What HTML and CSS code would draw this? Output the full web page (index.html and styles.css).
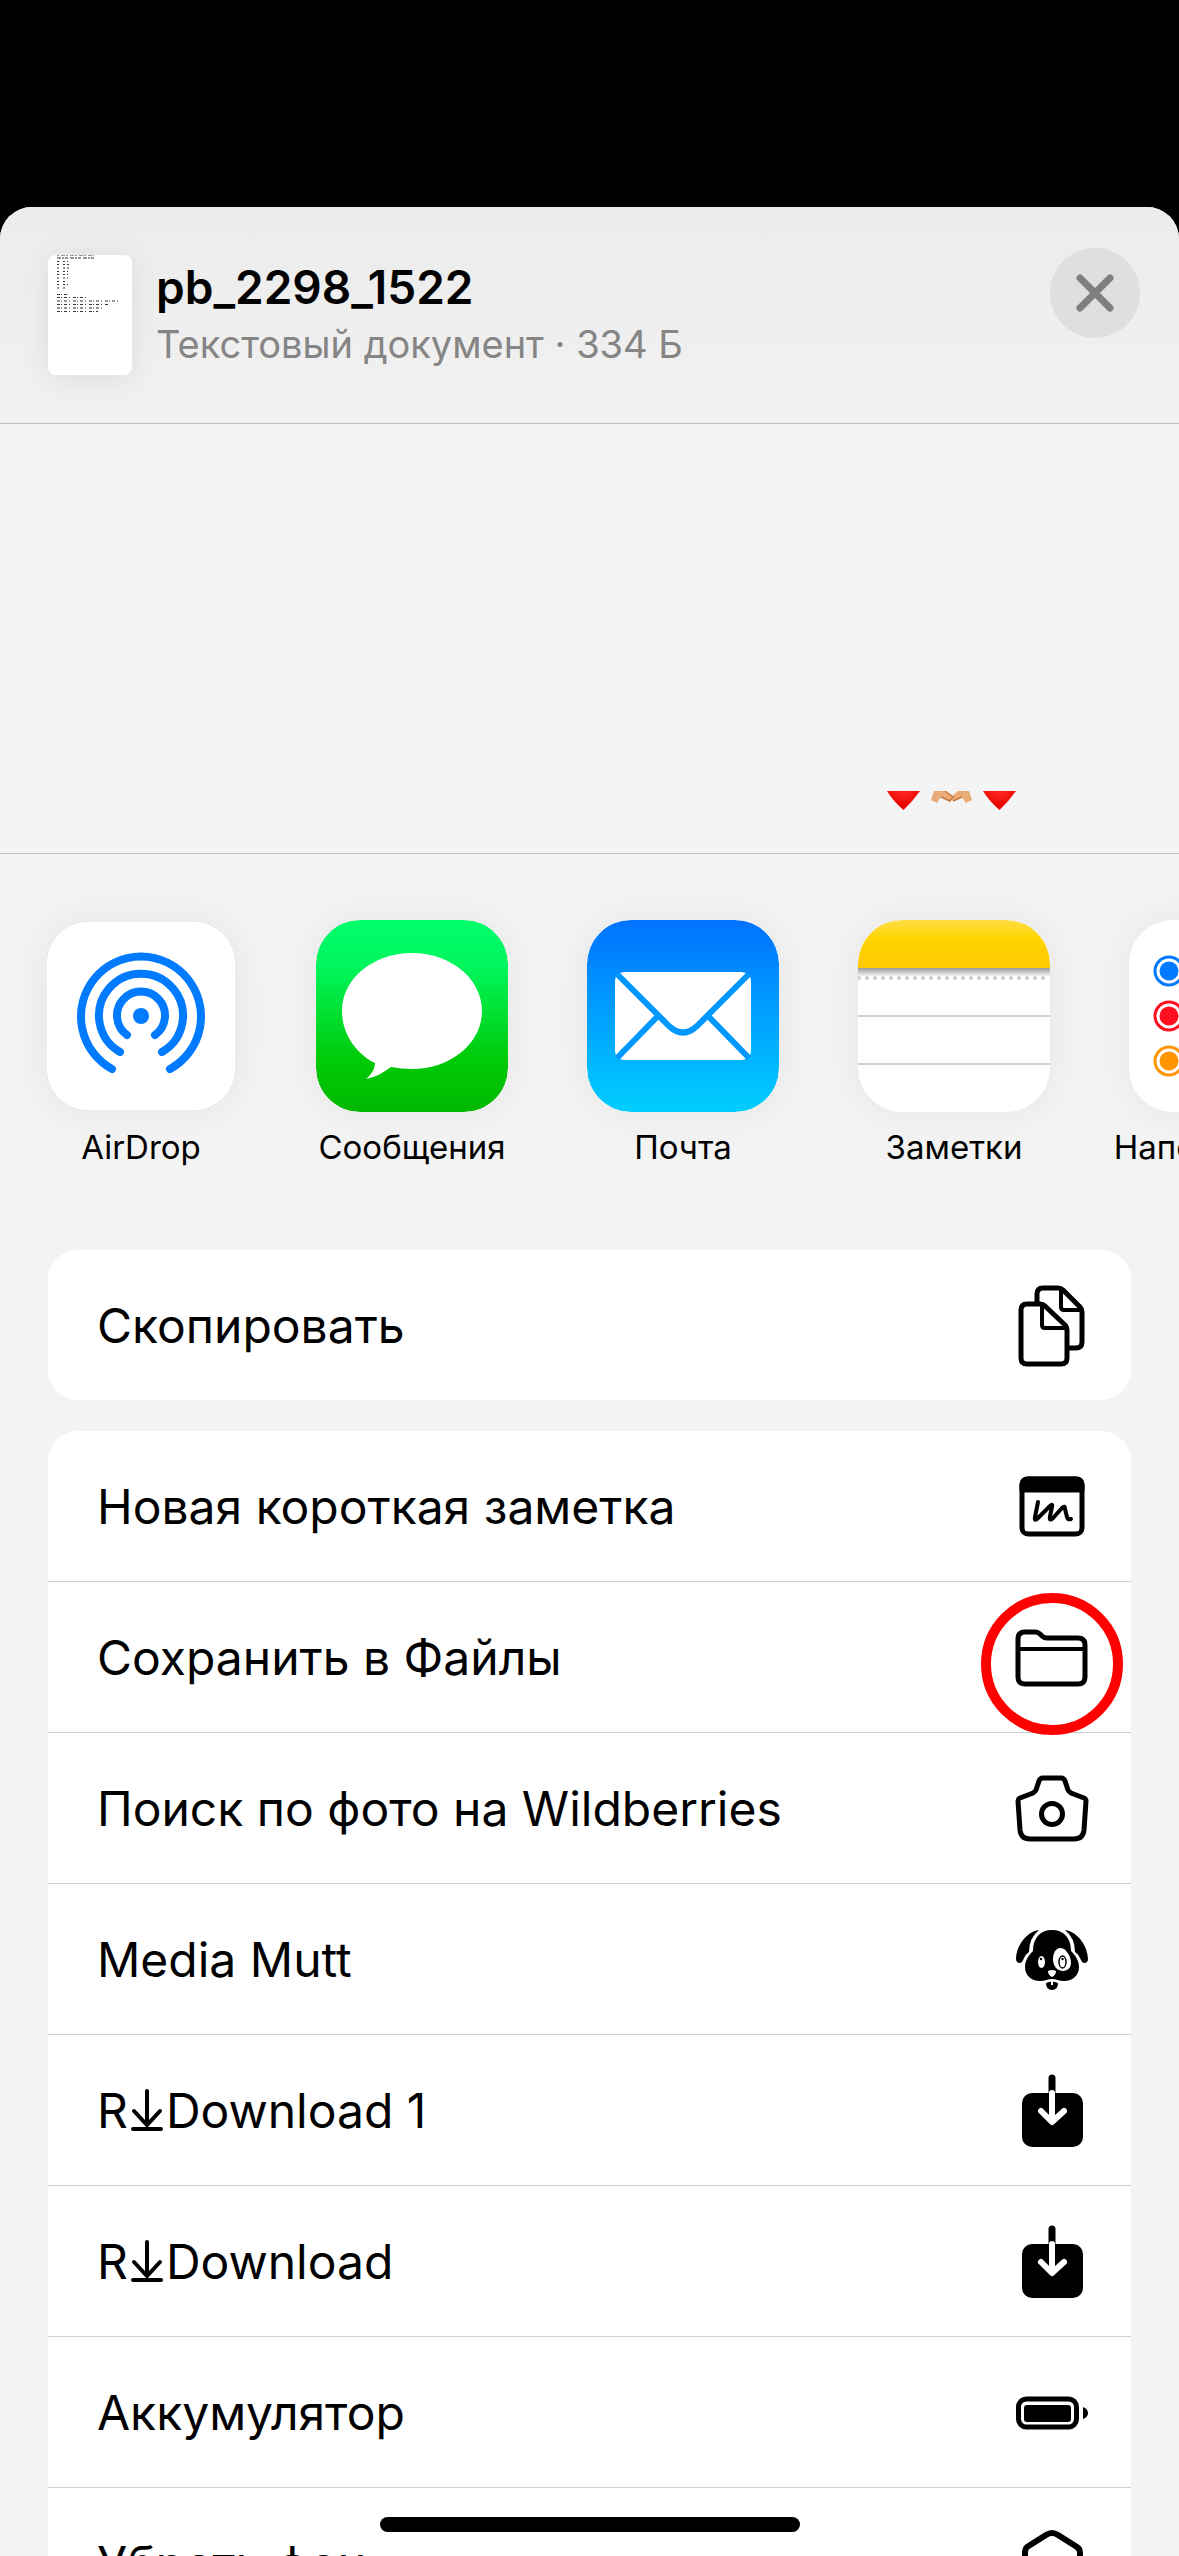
FILE: index.html
```html
<!DOCTYPE html>
<html lang="ru">

<head>
    <meta charset="UTF-8">
    <meta name="viewport" content="width=device-width, initial-scale=1.0">
    <title>pb_2298_1522</title>
    <link rel="stylesheet" href="styles.css">
</head>

<body>
    <main class="sheet">
        <!-- document header -->
        <header class="sheet-header">
            <svg class="thumb" viewBox="0 0 84 120" aria-hidden="true">
                <g stroke="#333" stroke-width="1.2" fill="none">
                    <path d="M9 .5h37" stroke-dasharray="2 2 4 1" opacity=".5" />
                    <path d="M9 3h38" stroke-dasharray="4 1 2 1 3 2" />
                    <path d="M9 6.500h11M9 9.500h15M9 13h16M9 16.500h11M9 19.500h11M9 23h11M9 26.500h10M9 29.500h11M9 33h10" stroke-dasharray="2 4 2 2" />
                    <path d="M9 39.500h10M9 42.500h32M9 46h64M9 49.500h51M9 53h48M9 56.500h41" stroke-dasharray="3 1 1 2 3 2 1 3" />
                </g>
            </svg>
            <div class="doc">
                <h1 class="doc-title">pb_2298_1522</h1>
                <p class="doc-info">Текстовый документ · 334 Б</p>
            </div>
            <button class="close" type="button" aria-label="Закрыть">
                <svg viewBox="0 0 90 90"><path d="M30 30l30 30M60 30L30 60" stroke="#7f7f80" stroke-width="7" stroke-linecap="round" /></svg>
            </button>
        </header>

        <!-- people -->
        <section class="people">
            <svg class="emoji" viewBox="0 0 130 20" aria-hidden="true">
                <defs>
                    <radialGradient id="heart" cx=".5" cy=".1" r=".7">
                        <stop offset="0" stop-color="#ff2a20" />
                        <stop offset="1" stop-color="#e60000" />
                    </radialGradient>
                </defs>
                <path d="M0 0h33Q26 10 16.500 19Q6 10 0 0z" fill="url(#heart)" />
                <path d="M47 0h11l7 6-2 4-9-4-4 6-6-3z" fill="#e9ac78" />
                <path d="M82 0h-11l-7 6 2 4 9-4 4 6 6-3z" fill="#e9ac78" />
                <path d="M54 6l9 4 3-4-8-6M75 6l-9 4" stroke="#c9763a" stroke-width="1.500" fill="none" />
                <path d="M96 0h33Q122 10 112.500 19Q102 10 96 0z" fill="url(#heart)" />
            </svg>
        </section>

        <!-- apps -->
        <nav class="apps">
            <a class="app" href="#">
                <svg class="app-icon" viewBox="0 0 192 192">
                    <rect class="edge" x="1" y="1" width="190" height="190" rx="43" fill="#fff" />
                    <g fill="none" stroke="#007aff" stroke-width="8" stroke-linecap="round">
                        <path d="M67 149A60 60 0 1 1 125 149" />
                        <path d="M75 132A42 42 0 1 1 117 132" />
                        <path d="M82 115A24 24 0 1 1 110 115" />
                    </g>
                    <circle cx="96" cy="96" r="8" fill="#007aff" />
                </svg>
                <span class="app-name">AirDrop</span>
            </a>
            <a class="app" href="#">
                <svg class="app-icon" viewBox="0 0 192 192">
                    <defs>
                        <linearGradient id="green" x2="0" y2="1">
                            <stop offset="0" stop-color="#00ff6c" />
                            <stop offset=".25" stop-color="#00f55c" />
                            <stop offset=".72" stop-color="#00cb08" />
                            <stop offset="1" stop-color="#00b800" />
                        </linearGradient>
                    </defs>
                    <rect width="192" height="192" rx="44" fill="url(#green)" />
                    <path d="M96 33c39 0 70 26 70 58s-31 58-70 58c-7 0-14-1-21-2-7 5-15 10-25 12 5-4 9-10 9-16-20-10-33-30-33-52 0-32 31-58 70-58z" fill="#fff" />
                </svg>
                <span class="app-name">Сообщения</span>
            </a>
            <a class="app" href="#">
                <svg class="app-icon" viewBox="0 0 192 192">
                    <defs>
                        <linearGradient id="blue" x2="0" y2="1">
                            <stop offset="0" stop-color="#0072ff" />
                            <stop offset="1" stop-color="#00ceff" />
                        </linearGradient>
                    </defs>
                    <rect width="192" height="192" rx="44" fill="url(#blue)" />
                    <rect x="28" y="52" width="136" height="88" rx="9" fill="#fff" />
                    <path d="M30 54L82 106Q96 119 110 106L162 54M30 138L70 97M162 138L122 97" fill="none" stroke="#0098ff" stroke-width="6" />
                </svg>
                <span class="app-name">Почта</span>
            </a>
            <a class="app" href="#">
                <svg class="app-icon" viewBox="0 0 192 192">
                    <defs>
                        <linearGradient id="yellow" x2="0" y2="1">
                            <stop offset="0" stop-color="#ffdd45" />
                            <stop offset=".4" stop-color="#ffd500" />
                            <stop offset="1" stop-color="#ffc800" />
                        </linearGradient>
                        <linearGradient id="shade" x2="0" y2="1">
                            <stop offset="0" stop-color="#999" />
                            <stop offset="1" stop-color="#fff" />
                        </linearGradient>
                        <clipPath id="tile"><rect width="192" height="192" rx="44" /></clipPath>
                    </defs>
                    <g clip-path="url(#tile)">
                        <rect width="192" height="192" fill="#fff" />
                        <rect width="192" height="48" fill="url(#yellow)" />
                        <rect y="48" width="192" height="9" fill="url(#shade)" />
                        <path d="M1 58h192" stroke="#ccc" stroke-width="4" stroke-linecap="round" stroke-dasharray="0 8" />
                        <path d="M0 96h192M0 144h192" stroke="#d0d0d2" stroke-width="2" />
                    </g>
                </svg>
                <span class="app-name">Заметки</span>
            </a>
            <a class="app" href="#">
                <svg class="app-icon" viewBox="0 0 192 192">
                    <rect width="192" height="192" rx="44" fill="#fff" />
                    <g fill="none" stroke-width="3">
                        <circle cx="40" cy="51" r="14" stroke="#007aff" />
                        <circle cx="40" cy="96" r="14" stroke="#ff1020" />
                        <circle cx="40" cy="141" r="14" stroke="#ff9500" />
                    </g>
                    <circle cx="40" cy="51" r="9.500" fill="#007aff" />
                    <circle cx="40" cy="96" r="9.500" fill="#ff1020" />
                    <circle cx="40" cy="141" r="9.500" fill="#ff9500" />
                    <path d="M70 74h122M70 119h122" stroke="#ddd" stroke-width="2" />
                </svg>
                <span class="app-name">Напоминания</span>
            </a>
        </nav>

        <!-- actions -->
        <div class="actions">
            <ul class="card">
                <li>
                    <button class="action" type="button">
                        <span>Скопировать</span>
                        <svg class="icon line" viewBox="0 0 90 90">
                            <path d="M30 22V14Q30 8 36 8H51Q54 8 56 10L73 27Q75 29 75 32V62Q75 68 69 68H62" />
                            <path d="M54 9V27Q54 30 57 30H74" stroke-width="4" />
                            <path d="M20 24H33Q36 24 38 26L58 45Q60 47 60 51V78Q60 84 54 84H20Q14 84 14 78V30Q14 24 20 24z" />
                            <path d="M35 25V45Q35 48 38 48H59" stroke-width="4" />
                        </svg>
                    </button>
                </li>
            </ul>

            <ul class="card">
                <li>
                    <button class="action" type="button">
                        <span>Новая короткая заметка</span>
                        <svg class="icon line" viewBox="0 0 90 90">
                            <rect x="15" y="18" width="60" height="55" rx="6" />
                            <path d="M15 29V24Q15 18 21 18H69Q75 18 75 24V29z" fill="#000" />
                            <path d="M31 41L28 56Q27 61 31 57L43 45Q46 42 45 46L43 55Q42 61 46 57L55 47Q58 44 58 48L60 56Q61 59 64 58" stroke-width="4" />
                        </svg>
                    </button>
                </li>
                <li>
                    <button class="action marked" type="button">
                        <span>Сохранить в Файлы</span>
                        <svg class="icon line" viewBox="0 0 90 90">
                            <path d="M18 20H28Q31 20 33 22L35 24Q37 26 40 26H71Q78 26 78 33V65Q78 72 71 72H18Q11 72 11 65V27Q11 20 18 20z" />
                            <path d="M11 37H78" stroke-width="4" />
                        </svg>
                    </button>
                </li>
                <li>
                    <button class="action" type="button">
                        <span>Поиск по фото на Wildberries</span>
                        <svg class="icon line" viewBox="0 0 90 90">
                            <path d="M36 15H54Q57 15 58 18L61 27Q62 29 64 30L77 35Q79 36 79 38L77 67Q76 76 67 76H23Q14 76 13 67L11 38Q11 36 13 35L26 30Q28 29 29 27L32 18Q33 15 36 15z" />
                            <circle cx="45" cy="51" r="10.500" />
                        </svg>
                    </button>
                </li>
                <li>
                    <button class="action" type="button">
                        <span>Media Mutt</span>
                        <svg class="icon" viewBox="0 0 90 90">
                            <path d="M32 16C18 18 9 34 9 45Q9 49 13 49Q15 49 17 44Q19 40 22 38Q22 24 32 16zM58 16C72 18 81 34 81 45Q81 49 77 49Q75 49 73 44Q71 40 68 38Q68 24 58 16z" />
                            <path d="M45 16C57 16 64 24 64 37C68 41 72 46 72 53C72 61 66 67 57 67C52 67 49 65 45 65C41 65 38 67 33 67C24 67 18 61 18 53C18 46 22 41 26 37C26 24 33 16 45 16z" />
                            <path d="M39 69Q45 66 51 69Q51 76 45 76Q39 76 39 69z" />
                            <path d="M53 34C59 34 64 42 64 49C64 54 60 57 56 57C50 57 46 52 46 45C46 39 49 34 53 34z" fill="#fff" />
                            <ellipse cx="34.500" cy="48" rx="3.500" ry="6" fill="#fff" />
                            <circle cx="34" cy="45" r="1.200" />
                            <ellipse cx="55.500" cy="48" rx="3.500" ry="6" fill="#fff" stroke="#000" stroke-width="1.500" />
                            <circle cx="55.500" cy="45" r="1.200" />
                            <path d="M41 57Q45 55 49 57Q49 61 45 63Q41 61 41 57z" fill="#fff" />
                            <path d="M45 67V71" stroke="#fff" stroke-width="2" />
                        </svg>
                    </button>
                </li>
                <li>
                    <button class="action" type="button">
                        <span>R<svg class="arrow" viewBox="0 0 38 42"><path d="M19 2V34M6 22L19 36L32 22M5 40H33" /></svg>Download 1</span>
                        <svg class="icon" viewBox="0 0 90 90">
                            <rect x="15" y="28" width="61" height="54" rx="10" />
                            <path d="M45 13V28" stroke="#000" stroke-width="7" stroke-linecap="round" />
                            <path d="M45 28V55M34 46L45 57L57 46" fill="none" stroke="#fff" stroke-width="6" stroke-linejoin="round" stroke-linecap="round" />
                        </svg>
                    </button>
                </li>
                <li>
                    <button class="action" type="button">
                        <span>R<svg class="arrow" viewBox="0 0 38 42"><path d="M19 2V34M6 22L19 36L32 22M5 40H33" /></svg>Download</span>
                        <svg class="icon" viewBox="0 0 90 90">
                            <rect x="15" y="28" width="61" height="54" rx="10" />
                            <path d="M45 13V28" stroke="#000" stroke-width="7" stroke-linecap="round" />
                            <path d="M45 28V55M34 46L45 57L57 46" fill="none" stroke="#fff" stroke-width="6" stroke-linejoin="round" stroke-linecap="round" />
                        </svg>
                    </button>
                </li>
                <li>
                    <button class="action" type="button">
                        <span>Аккумулятор</span>
                        <svg class="icon" viewBox="0 0 90 90">
                            <rect x="11.500" y="32" width="58" height="28" rx="8" fill="none" stroke="#000" stroke-width="5" />
                            <rect x="17" y="38" width="47" height="17" rx="3" />
                            <path d="M76 40Q81 42 81 46Q81 50 76 52z" />
                        </svg>
                    </button>
                </li>
                <li>
                    <button class="action" type="button">
                        <span>Убрать фон</span>
                        <svg class="icon" viewBox="0 0 90 90">
                            <path d="M39 17Q45 13 51 17L70 29Q73 31 73 35V62Q73 66 70 68L50 79Q45 82 40 79L20 68Q18 66 18 62V35Q18 31 20 29z" fill="none" stroke="#000" stroke-width="6" />
                        </svg>
                    </button>
                </li>
            </ul>
        </div>
    </main>

    <div class="home-bar"></div>
</body>

</html>
```

FILE: styles.css
```css
*,
::after,
::before {
    margin: 0;
    padding: 0;
    box-sizing: border-box;
}

body {
    height: 100vh;
    padding-top: 207px;
    overflow: hidden;
    position: relative;
    background-color: #000;
    color: #000;
    font-family: Inter, "Noto Sans", sans-serif;
}

button {
    border: none;
    background: none;
    color: inherit;
    font: inherit;
}

a {
    color: inherit;
    text-decoration: none;
}

ul {
    list-style: none;
}

.sheet {
    height: 100%;
    overflow: hidden;
    border-radius: 32px 32px 0 0;
    background-color: #f3f3f3;
}

/* header */

.sheet-header {
    height: 217px;
    padding: 41px 39px 0 48px;
    display: flex;
    align-items: flex-start;
    border-bottom: 1px solid #bcbcbc;
    background: linear-gradient(#ececec, #f1f1f1);
}

.thumb {
    width: 84px;
    height: 120px;
    margin-top: 7px;
    border-radius: 8px;
    background-color: #fff;
    box-shadow: 0 4px 30px rgba(0, 0, 0, 0.08);
}

.doc {
    flex: 1;
    padding: 12px 0 0 24px;
}

.doc-title {
    font-size: 46px;
    font-weight: 600;
    line-height: 54px;
}

.doc-info {
    color: #858585;
    font-size: 38px;
    line-height: 60px;
}

.close {
    width: 90px;
    height: 90px;
    border-radius: 50%;
    background-color: #dfdfdf;
}

.close svg {
    display: block;
}

/* people */

.people {
    height: 430px;
    padding-right: 162px;
    display: flex;
    justify-content: flex-end;
    align-items: flex-end;
    border-bottom: 1px solid #bcbcbc;
    background-color: #f4f4f4;
}

.emoji {
    width: 130px;
    height: 20px;
    margin-bottom: 42px;
}

/* apps */

.apps {
    height: 396px;
    padding: 66px 0 0 45px;
    display: flex;
    gap: 79px;
}

.app {
    width: 192px;
    flex-shrink: 0;
    display: flex;
    flex-direction: column;
    align-items: center;
}

.app-icon {
    width: 192px;
    height: 192px;
    border-radius: 44px;
    box-shadow: 0 0 40px rgba(0, 0, 0, 0.06);
}

.edge {
    stroke: #e2e2e2;
}

.app-name {
    margin-top: 15px;
    font-size: 33px;
    line-height: 40px;
}

/* actions */

.actions {
    padding: 0 48px;
    display: flex;
    flex-direction: column;
    gap: 31px;
}

.card {
    border-radius: 30px;
    overflow: hidden;
    background-color: #fff;
}

.card li + li {
    border-top: 1px solid #cfcfcf;
}

.action {
    width: 100%;
    height: 150px;
    padding: 0 34px 0 49px;
    display: flex;
    justify-content: space-between;
    align-items: center;
    position: relative;
    font-size: 48px;
    text-align: left;
}

.icon {
    width: 90px;
    height: 90px;
}

.line {
    fill: none;
    stroke: #000;
    stroke-width: 5;
    stroke-linejoin: round;
}

.line path {
    stroke-linecap: round;
}

.arrow {
    width: 38px;
    height: 42px;
    vertical-align: -3px;
    fill: none;
    stroke: #000;
    stroke-width: 4;
    stroke-linecap: round;
}

/* red ring round the folder */

.marked::after {
    content: "";
    width: 142px;
    height: 142px;
    border: 10px solid #f00;
    border-radius: 50%;
    position: absolute;
    top: 11px;
    right: 8px;
    z-index: 1;
}

.home-bar {
    width: 420px;
    height: 15px;
    border-radius: 8px;
    background-color: #000;
    position: absolute;
    bottom: 24px;
    left: 50%;
    margin-left: -210px;
}
```
